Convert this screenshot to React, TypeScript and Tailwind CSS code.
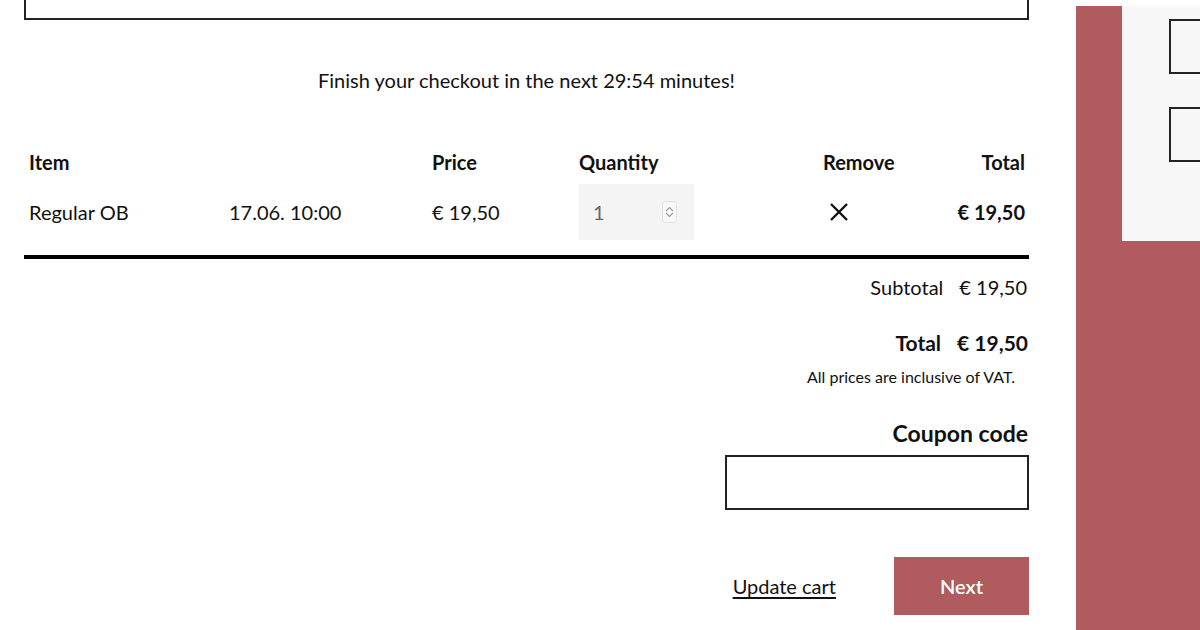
import React from "react";

const Cross: React.FC = () => (
  <svg width="22" height="22" viewBox="0 0 22 22" fill="none" stroke="#111" strokeWidth="2.4" strokeLinecap="butt">
    <path d="M3 3 L19 19 M19 3 L3 19" />
  </svg>
);

const Spinner: React.FC = () => (
  <div className="flex h-[22px] w-[15px] flex-col items-center justify-center rounded-[3px] border border-[#e3e3e3] bg-[#f9f9f9]">
    <svg width="9" height="6" viewBox="0 0 9 6" fill="none" stroke="#999" strokeWidth="1.1">
      <path d="M1 5 L4.5 1.5 L8 5" />
    </svg>
    <svg width="9" height="6" viewBox="0 0 9 6" fill="none" stroke="#999" strokeWidth="1.1">
      <path d="M1 1 L4.5 4.5 L8 1" />
    </svg>
  </div>
);

const App: React.FC = () => {
  return (
    <div className="flex h-[630px] w-[1200px] overflow-hidden bg-white font-['Lato',sans-serif] text-[#111]">
      <main className="ml-[24px] w-[1005px] shrink-0">
        <div className="h-[20px] border-x-2 border-b-2 border-[#222]"></div>

        <p className="mt-[48px] text-center text-[20px] leading-[24px]">
          Finish your checkout in the next 29:54 minutes!
        </p>

        <div className="mt-[58px] grid grid-cols-[200px_203px_147px_244px_1fr_auto] items-center px-[5px] pr-[4px] text-[20px] leading-[24px]">
          <div className="font-bold">Item</div>
          <div></div>
          <div className="font-bold">Price</div>
          <div className="font-bold">Quantity</div>
          <div className="font-bold">Remove</div>
          <div className="text-right font-bold">Total</div>

          <div className="mt-[10px]">Regular OB</div>
          <div className="mt-[10px]">17.06. 10:00</div>
          <div className="mt-[10px]">€ 19,50</div>
          <div className="mt-[10px]">
            <div className="flex h-[56px] w-[115px] items-center justify-between bg-[#f4f4f4] pl-[14px] pr-[17px] text-[#666]">
              <span>1</span>
              <Spinner />
            </div>
          </div>
          <div className="mt-[10px] pl-[5px]">
            <Cross />
          </div>
          <div className="mt-[10px] text-right font-bold">€ 19,50</div>
        </div>

        <div className="mt-[15px] h-[4px] bg-black"></div>

        <div className="flex flex-col items-end">
          <div className="mt-[16px] flex gap-[16px] pr-[2px] text-[20px] leading-[24px]">
            <span>Subtotal</span>
            <span>€ 19,50</span>
          </div>
          <div className="mt-[32px] flex gap-[16px] pr-[1px] text-[21px] font-bold leading-[24px]">
            <span>Total</span>
            <span>€ 19,50</span>
          </div>
          <p className="mt-[12px] pr-[14px] text-[16px] leading-[20px]">All prices are inclusive of VAT.</p>

          <h3 className="mt-[32px] pr-[1px] text-[23px] font-bold leading-[28px]">Coupon code</h3>
          <input
            className="mt-[8px] h-[55px] w-[304px] border-2 border-[#222] bg-white outline-none"
            type="text"
          />

          <div className="mt-[47px] flex items-center gap-[58px]">
            <a className="text-[20px] underline underline-offset-[3px]" href="#">
              Update cart
            </a>
            <button className="h-[58px] w-[135px] bg-[#b05c5e] text-[20px] font-semibold text-white">Next</button>
          </div>
        </div>
      </main>

      <aside className="ml-[47px] mt-[6px] flex-1 bg-[#b05c5e]">
        <div className="ml-[46px] h-[235px] bg-[#f7f7f7] pl-[47px] pt-[13px]">
          <div className="h-[55px] border-2 border-r-0 border-[#222]"></div>
          <div className="mt-[33px] h-[55px] border-2 border-r-0 border-[#222]"></div>
        </div>
      </aside>
    </div>
  );
};

export default App;
